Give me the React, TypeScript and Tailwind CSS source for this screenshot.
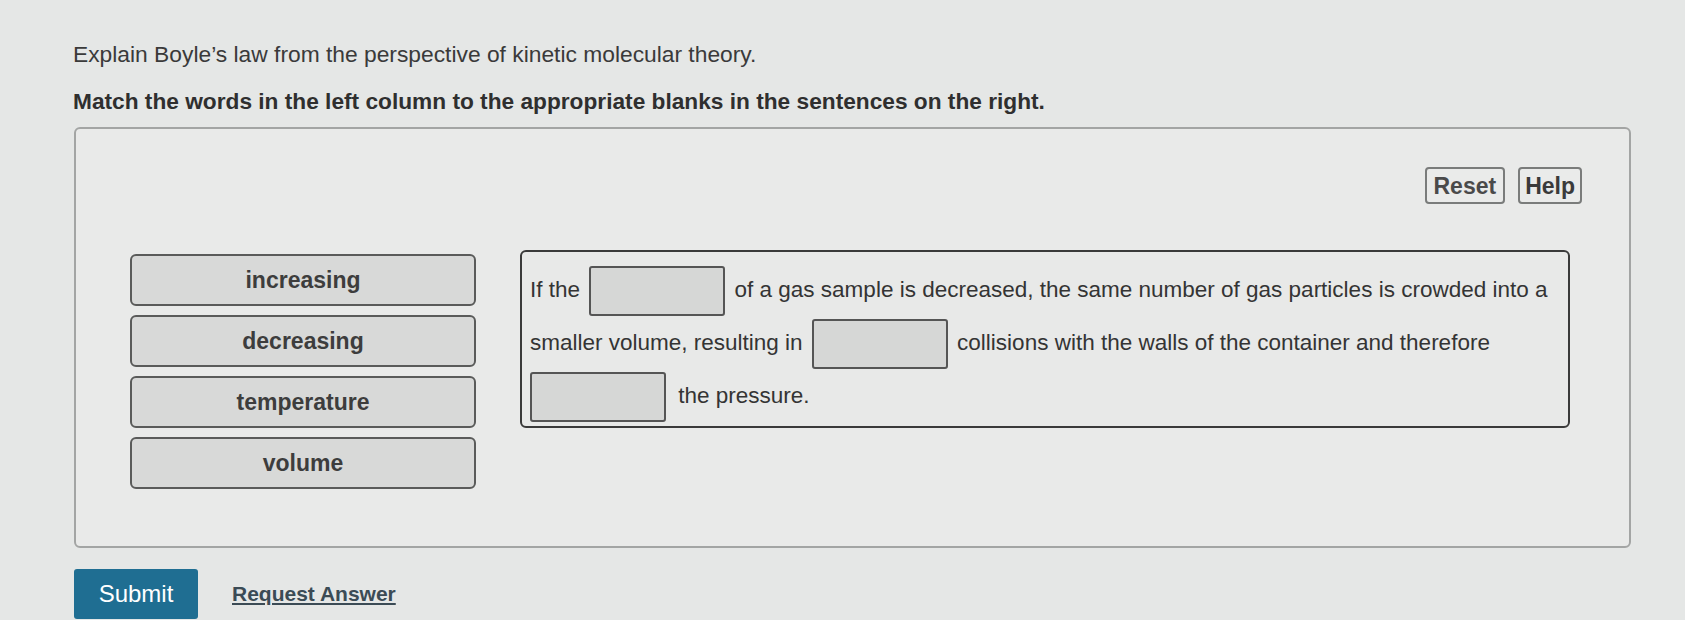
import React from 'react';

const words = ['increasing', 'decreasing', 'temperature', 'volume'];

function Blank() {
  return (
    <span className="inline-block w-[136px] h-[50px] align-middle rounded-[3px] border-2 border-[#555] bg-[#d6d7d6]" />
  );
}

export default function App() {
  return (
    <div className="w-[1685px] h-[620px] overflow-hidden bg-[#e5e7e6] font-['Liberation_Sans',Arial,sans-serif] text-[#333]">
      <div className="pl-[73px] pt-[40px]">
        <p className="text-[22.8px] leading-[28px] text-[#3a3a3a]">
          Explain Boyle’s law from the perspective of kinetic molecular theory.
        </p>
        <p className="mt-[19px] text-[22.7px] leading-[28px] font-bold text-[#2f2f2f]">
          Match the words in the left column to the appropriate blanks in the sentences on the right.
        </p>
      </div>

      <div className="ml-[74px] mt-[12px] w-[1557px] h-[421px] rounded-[6px] border-2 border-[#a3a5a4] bg-[#e9eae9] pt-[38px] pr-[47px] pl-[54px]">
        <div className="flex justify-end gap-[13px]">
          <button className="h-[37px] px-[7px] rounded-[4px] border-2 border-[#7a7c7b] bg-[#eaebea] text-[23px] font-bold text-[#4a4a4a]">
            Reset
          </button>
          <button className="h-[37px] px-[5px] rounded-[4px] border-2 border-[#7a7c7b] bg-[#eaebea] text-[23px] font-bold text-[#3a3a3a]">
            Help
          </button>
        </div>

        <div className="mt-[46px] flex items-start gap-[44px]">
          <div className="mt-[4px] flex flex-col gap-[9px]">
            {words.map(w => (
              <div
                key={w}
                className="w-[346px] h-[52px] rounded-[6px] border-2 border-[#5a5b5a] bg-[#d8d9d8] flex justify-center pt-[7px] text-[23px] font-bold text-[#3d3d3d]"
              >
                {w}
              </div>
            ))}
          </div>

          <div className="w-[1050px] h-[178px] rounded-[6px] border-2 border-[#3a3a3a] bg-[#e8e9e8] pl-[8px] pt-[11px] text-[22.5px] leading-[53px] text-[#343434]">
            <div className="whitespace-nowrap">
              If the <span className="mx-[3px]"><Blank /></span> of a gas sample is decreased, the same number of gas particles is crowded into a
            </div>
            <div className="whitespace-nowrap">
              smaller volume, resulting in <span className="mx-[3px]"><Blank /></span> collisions with the walls of the container and therefore
            </div>
            <div className="whitespace-nowrap">
              <Blank /> <span className="ml-[6px]">the pressure.</span>
            </div>
          </div>
        </div>
      </div>

      <div className="ml-[74px] mt-[21px] flex items-center gap-[34px]">
        <button className="w-[124px] h-[50px] rounded-[3px] bg-[#1f6e92] text-white text-[24px] leading-[50px]">
          Submit
        </button>
        <a className="text-[21px] font-bold underline text-[#3b4b55]">Request Answer</a>
      </div>
    </div>
  );
}
